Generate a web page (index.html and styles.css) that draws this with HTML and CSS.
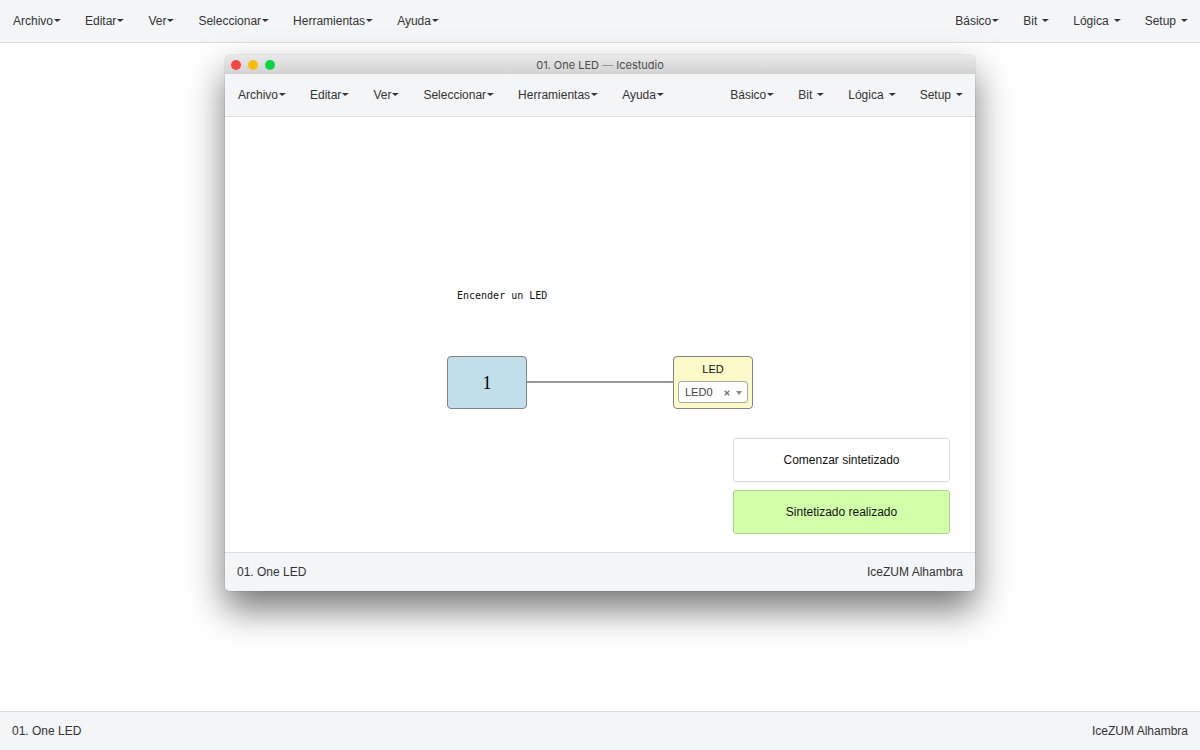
FILE: index.html
```html
<!DOCTYPE html>
<html lang="es">
<head>
<meta charset="utf-8">
<title>01. One LED — Icestudio</title>
<link rel="stylesheet" href="styles.css">
</head>
<body class="app">
<nav class="navbar">
  <div class="menu">
    <button class="menu-item">Archivo<span class="caret"></span></button>
    <button class="menu-item">Editar<span class="caret"></span></button>
    <button class="menu-item">Ver<span class="caret"></span></button>
    <button class="menu-item">Seleccionar<span class="caret"></span></button>
    <button class="menu-item">Herramientas<span class="caret"></span></button>
    <button class="menu-item">Ayuda<span class="caret"></span></button>
  </div>
  <div class="menu">
    <button class="menu-item">Básico<span class="caret"></span></button>
    <button class="menu-item spaced">Bit<span class="caret"></span></button>
    <button class="menu-item spaced">Lógica<span class="caret"></span></button>
    <button class="menu-item spaced">Setup<span class="caret"></span></button>
  </div>
</nav>

<main class="desktop">
  <section class="window">
    <header class="titlebar">
      <div class="lights">
        <button class="light close" aria-label="Cerrar"></button>
        <button class="light minimize" aria-label="Minimizar"></button>
        <button class="light maximize" aria-label="Maximizar"></button>
      </div>
      <h1 class="title">01. One LED <span class="dash">—</span> Icestudio</h1>
    </header>
    <nav class="navbar">
      <div class="menu">
        <button class="menu-item">Archivo<span class="caret"></span></button>
        <button class="menu-item">Editar<span class="caret"></span></button>
        <button class="menu-item">Ver<span class="caret"></span></button>
        <button class="menu-item">Seleccionar<span class="caret"></span></button>
        <button class="menu-item">Herramientas<span class="caret"></span></button>
        <button class="menu-item">Ayuda<span class="caret"></span></button>
      </div>
      <div class="menu">
        <button class="menu-item">Básico<span class="caret"></span></button>
        <button class="menu-item spaced">Bit<span class="caret"></span></button>
        <button class="menu-item spaced">Lógica<span class="caret"></span></button>
        <button class="menu-item spaced">Setup<span class="caret"></span></button>
      </div>
    </nav>
    <div class="canvas">
      <p class="note">Encender un LED</p>
      <div class="wire"></div>
      <div class="block constant">1</div>
      <div class="block output">
        <label class="block-label" for="pin">LED</label>
        <div class="picker">
          <select class="pin" id="pin"><option>LED0</option></select>
          <button class="clear" aria-label="Quitar">
            <svg width="6" height="6" viewBox="0 0 6 6"><path d="M0.7 0.7L5.3 5.3M5.3 0.7L0.7 5.3" stroke="#777" stroke-width="1.4"/></svg>
          </button>
          <span class="arrow"></span>
        </div>
      </div>
      <div class="toasts">
        <div class="toast">Comenzar sintetizado</div>
        <div class="toast success">Sintetizado realizado</div>
      </div>
    </div>
    <footer class="statusbar"><span>01. One LED</span><span>IceZUM Alhambra</span></footer>
  </section>
</main>

<footer class="statusbar"><span>01. One LED</span><span>IceZUM Alhambra</span></footer>
</body>
</html>
```

FILE: styles.css
```css
* { box-sizing: border-box; }

.app {
  margin: 0;
  min-height: 100vh;
  display: flex;
  flex-direction: column;
  background: #fff;
  color: #333;
  font: 12px/16px "Liberation Sans", Arial, sans-serif;
}

button {
  padding: 0;
  border: 0;
  background: none;
  color: inherit;
  font: inherit;
}

.navbar {
  display: flex;
  justify-content: space-between;
  padding: 12px 12px 13px 13px;
  background: #f4f5f7;
  border-bottom: 1px solid #dcdee0;
}

.menu { display: flex; gap: 24px; }

.menu-item {
  display: flex;
  align-items: center;
  gap: 1px;
  height: 17px;
  white-space: nowrap;
}

.menu-item.spaced { gap: 5px; }

.caret {
  border: 3px solid transparent;
  border-top-color: #333;
  border-bottom: 0;
  border-right-width: 4px;
}

.desktop {
  flex: 1;
  display: flex;
  justify-content: center;
  padding: 12px 0 120px;
}

.window {
  width: 62.5%;
  min-width: 750px;
  display: flex;
  flex-direction: column;
  border-radius: 5px;
  overflow: hidden;
  background: #fff;
  box-shadow: 0 0 1px rgba(0, 0, 0, 0.5), 0 18px 36px rgba(0, 0, 0, 0.54);
}

.titlebar {
  display: grid;
  grid-template-columns: 1fr auto 1fr;
  align-items: center;
  height: 19px;
  padding: 0 6px;
  background: linear-gradient(#e9e9e9, #d2d2d2);
}

.lights { display: flex; gap: 7px; }

.light { width: 10px; height: 10px; border-radius: 50%; }
.close { background: #fc4345; }
.minimize { background: #fdbc09; }
.maximize { background: #0ad544; }

.title {
  margin: 0;
  color: #4c4c4c;
  font: 11px/16px Inter, "Liberation Sans", sans-serif;
}

.dash { color: #999; }

.canvas {
  position: relative;
  flex: 1;
  min-height: 420px;
}

.note {
  position: absolute;
  left: 232px;
  top: 171px;
  margin: 0;
  color: #111;
  font: 10px/16px "DejaVu Sans Mono", monospace;
}

.wire {
  position: absolute;
  left: 301px;
  top: 264px;
  width: 148px;
  height: 2px;
  background: #999;
}

.block {
  position: absolute;
  top: 239px;
  width: 80px;
  height: 53px;
  border: 1px solid #838383;
  border-radius: 4px;
}

.constant {
  left: 222px;
  display: grid;
  place-items: center;
  background: #c0dfeb;
  color: #000;
  font: 18px/24px "Liberation Serif", "Times New Roman", serif;
}

.output {
  left: 448px;
  display: flex;
  flex-direction: column;
  justify-content: space-between;
  padding: 4px 4px 5px;
  background: #fbfac8;
}

.block-label {
  color: #111;
  font-size: 11px;
  text-align: center;
}

.picker {
  position: relative;
  display: flex;
}

.pin {
  flex: 1;
  height: 22px;
  padding: 0 20px 1px 6px;
  appearance: none;
  border: 1px solid #aaa;
  border-radius: 3px;
  background: #fff;
  color: #444;
  font: 11px/16px "Liberation Sans", Arial, sans-serif;
}

.clear {
  position: absolute;
  right: 18px;
  top: 9px;
  display: flex;
}

.arrow {
  position: absolute;
  right: 6px;
  top: 10px;
  border: 3px solid transparent;
  border-top: 4px solid #888;
  border-bottom: 0;
}

.toasts {
  position: absolute;
  right: 25px;
  bottom: 18px;
  width: 217px;
  display: flex;
  flex-direction: column;
  gap: 8px;
}

.toast {
  padding: 13px 12px;
  border: 1px solid #ddd;
  border-radius: 3px;
  background: #fff;
  color: #111;
  text-align: center;
}

.success {
  background: #d2ffa9;
  border-color: #add68a;
}

.statusbar {
  display: flex;
  justify-content: space-between;
  padding: 11px 12px;
  background: #f4f5f7;
  border-top: 1px solid #dcdee0;
}
```
